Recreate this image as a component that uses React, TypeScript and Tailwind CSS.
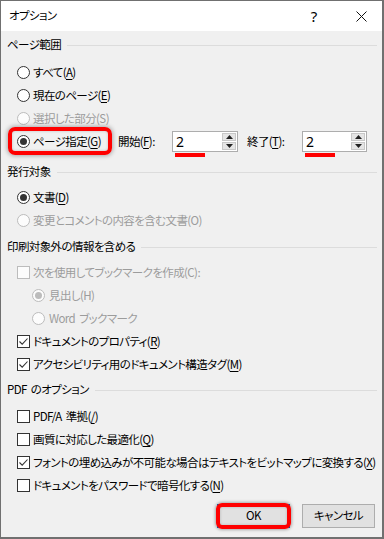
import React from "react";

const FONT =
  "font-['Yu_Gothic_UI','Noto_Sans_CJK_JP',sans-serif] [font-feature-settings:'palt'] text-[11.5px] tracking-[-0.6px]";

function Radio({ checked = false, disabled = false }: { checked?: boolean; disabled?: boolean }) {
  return (
    <span
      className={`flex shrink-0 w-[13px] h-[13px] rounded-full border items-center justify-center ${
        disabled ? "border-[#bcbcbc] bg-[#fcfcfc]" : "border-[#333333] bg-white"
      }`}
    >
      {checked && (
        <span className={`w-[7px] h-[7px] rounded-full ${disabled ? "bg-[#bcbcbc]" : "bg-[#333333]"}`} />
      )}
    </span>
  );
}

function Check({ checked = false, disabled = false }: { checked?: boolean; disabled?: boolean }) {
  return (
    <span
      className={`flex shrink-0 w-[13px] h-[13px] border items-center justify-center ${
        disabled ? "border-[#bcbcbc] bg-[#fcfcfc]" : "border-[#333333] bg-white"
      }`}
    >
      {checked && (
        <svg width="11" height="11" viewBox="0 0 11 11">
          <path d="M1.5 5.5 L4.2 8.2 L9.5 2.5" fill="none" stroke="#333333" strokeWidth="1.1" />
        </svg>
      )}
    </span>
  );
}

function U({ children }: { children: React.ReactNode }) {
  return <span className="underline underline-offset-[2px] decoration-[1px]">{children}</span>;
}

function Sp() {
  return <span className="inline-block w-[4px]" />;
}

function Header({ title, className = "" }: { title: React.ReactNode; className?: string }) {
  return (
    <div className={`flex items-center h-[20px] gap-[6px] pr-[5px] ${className}`}>
      <span className="text-black whitespace-nowrap">{title}</span>
      <span className="flex-1 h-px bg-[#dcdcdc]" />
    </div>
  );
}

function RadioRow({
  label,
  checked,
  disabled,
  indent = false,
}: {
  label: React.ReactNode;
  checked?: boolean;
  disabled?: boolean;
  indent?: boolean;
}) {
  return (
    <div className={`flex items-center h-[23px] ${indent ? "pl-[25px] gap-[4px]" : "pl-[10px] gap-[3px]"}`}>
      <Radio checked={checked} disabled={disabled} />
      <span className={`whitespace-nowrap ${disabled ? "text-[#9c9c9c]" : "text-black"}`}>{label}</span>
    </div>
  );
}

function CheckRow({ label, checked, disabled }: { label: React.ReactNode; checked?: boolean; disabled?: boolean }) {
  return (
    <div className="flex items-center h-[23px] gap-[3px] pl-[10px]">
      <Check checked={checked} disabled={disabled} />
      <span className={`whitespace-nowrap ${disabled ? "text-[#9c9c9c]" : "text-black"}`}>{label}</span>
    </div>
  );
}

function SpinBox({ value, width }: { value: string; width: string }) {
  return (
    <div className={`relative flex h-[21px] bg-white border border-[#adadad] ${width}`}>
      <div className="flex-1 flex items-center pl-[3px] text-[14px] tracking-normal font-['Segoe_UI','Noto_Sans',sans-serif] text-black">
        {value}
      </div>
      <div className="flex flex-col w-[16px] gap-px p-px">
        <div className="flex-1 flex items-center justify-center bg-[#e5e5e5] border border-[#c8c8c8]">
          <svg width="7" height="4" viewBox="0 0 7 4">
            <path d="M0 4 L3.5 0 L7 4 Z" fill="#222" />
          </svg>
        </div>
        <div className="flex-1 flex items-center justify-center bg-[#e5e5e5] border border-[#c8c8c8]">
          <svg width="7" height="4" viewBox="0 0 7 4">
            <path d="M0 0 L3.5 4 L7 0 Z" fill="#222" />
          </svg>
        </div>
      </div>
      <span className="absolute left-[2px] top-[21px] w-[30px] h-[4px] bg-[#ff0000]" />
    </div>
  );
}

export default function App() {
  return (
    <div
      className={`w-[384px] h-[539px] flex flex-col bg-[#f0f0f0] border-l border-t border-r-2 border-b-2 border-[#707070] overflow-hidden ${FONT}`}
    >
      {/* Title bar */}
      <div className="flex items-center h-[30px] bg-white pl-[8px] shrink-0">
        <span className="text-black">オプション</span>
        <span className="flex-1" />
        <span className="w-[20px] text-center text-[15px] tracking-normal text-black font-['Segoe_UI','Noto_Sans',sans-serif] mr-[31px]">
          ?
        </span>
        <span className="flex items-center justify-center w-[12px] mr-[15px]">
          <svg width="11" height="11" viewBox="0 0 11 11">
            <path d="M0.5 0.5 L10.5 10.5 M10.5 0.5 L0.5 10.5" stroke="#111" strokeWidth="1" />
          </svg>
        </span>
      </div>

      {/* Body */}
      <div className="flex flex-col pl-[6px] flex-1">
        <Header title="ページ範囲" className="mt-[4px]" />
        <div className="flex flex-col mt-[6px]">
          <RadioRow label={<>すべて(<U>A</U>)</>} />
          <RadioRow label={<>現在のページ(<U>E</U>)</>} />
          <RadioRow label="選択した部分(S)" disabled />
          <div className="flex items-center h-[23px] pl-[10px]">
            <div className="relative flex items-center gap-[3px] w-[101px]">
              <Radio checked />
              <span className="whitespace-nowrap text-black">
                ページ指定(<U>G</U>)
              </span>
              <span className="absolute left-[-9px] top-[-6px] w-[104px] h-[28px] border-[4px] border-[#ff0000] rounded-[7px] shadow-[0_0_4px_1px_rgba(0,0,0,0.3),inset_0_0_3px_rgba(0,0,0,0.2)]" />
            </div>
            <span className="text-black whitespace-nowrap w-[54px]">
              開始(<U>F</U>):
            </span>
            <SpinBox value="2" width="w-[66px]" />
            <span className="text-black whitespace-nowrap w-[55px] ml-[9px]">
              終了(<U>T</U>):
            </span>
            <SpinBox value="2" width="w-[65px]" />
          </div>
        </div>

        <Header title="発行対象" className="mt-[9px]" />
        <div className="flex flex-col mt-[4px]">
          <RadioRow label={<>文書(<U>D</U>)</>} checked />
          <RadioRow label="変更とコメントの内容を含む文書(O)" disabled />
        </div>

        <Header title="印刷対象外の情報を含める" className="mt-[5px]" />
        <div className="flex flex-col mt-[4px]">
          <CheckRow label="次を使用してブックマークを作成(C):" disabled />
          <RadioRow label="見出し(H)" checked disabled indent />
          <RadioRow label={<>Word<Sp />ブックマーク</>} disabled indent />
          <CheckRow label={<>ドキュメントのプロパティ(<U>R</U>)</>} checked />
          <CheckRow label={<>アクセシビリティ用のドキュメント構造タグ(<U>M</U>)</>} checked />
        </div>

        <Header title={<>PDF<Sp />のオプション</>} className="mt-[4px]" />
        <div className="flex flex-col mt-[5px]">
          <CheckRow label={<>PDF/A<Sp />準拠(<U>/</U>)</>} />
          <CheckRow label={<>画質に対応した最適化(<U>Q</U>)</>} />
          <CheckRow label={<>フォントの埋め込みが不可能な場合はテキストをビットマップに変換する(<U>X</U>)</>} checked />
          <CheckRow label={<>ドキュメントをパスワードで暗号化する(<U>N</U>)</>} />
        </div>

        <div className="flex justify-end gap-[12px] pr-[7px] mt-[7px]">
          <div className="relative flex items-center justify-center w-[73px] h-[24px] bg-[#e1e1e1] border border-[#0078d7] text-black">
            OK
            <span className="absolute left-[-2px] top-[-2px] w-[75px] h-[26px] border-[4px] border-[#ff0000] rounded-[6px] shadow-[0_0_3px_1px_rgba(0,0,0,0.3),inset_0_0_3px_rgba(0,0,0,0.2)]" />
          </div>
          <div className="flex items-center justify-center w-[73px] h-[24px] bg-[#e1e1e1] border border-[#adadad] text-black">
            キャンセル
          </div>
        </div>
      </div>
    </div>
  );
}
